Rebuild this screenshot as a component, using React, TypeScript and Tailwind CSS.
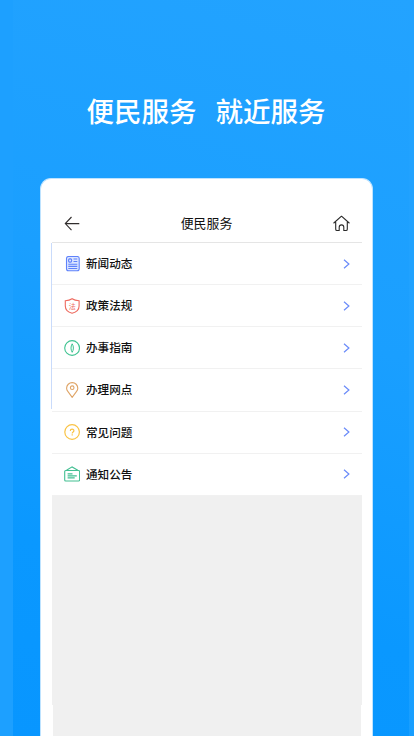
import type { ReactNode } from 'react';

function NewsIcon() {
  return (
    <svg width="16" height="16" viewBox="0 0 16 16" fill="none" stroke="#5f82fb" strokeWidth="1.100">
      <rect x="2.500" y="0.500" width="12.700" height="14.300" rx="2" fill="#dde6ff" />
      <rect x="4.600" y="2.900" width="3" height="3.200" rx="1" />
      <path d="M9.500 3h3.800M9.500 5.500h3.800M4.300 8.300h9M4.300 10.400h9M4.300 12.500h9" />
    </svg>
  );
}

function LawIcon() {
  return (
    <svg width="16" height="16" viewBox="0 0 16 16" fill="none" stroke="#ee695e" strokeWidth="1.100">
      <path d="M8.100 0.700C10 1.900 12.500 2.500 15.100 2.700V8C15.100 12 12 14.200 8.100 15.300C4.200 14.200 1.300 12 1.300 8V2.700C3.800 2.500 6.200 1.900 8.100 0.700Z" />
      <text x="8.200" y="10.500" textAnchor="middle" fontSize="7" fill="#ee695e" stroke="none" fontFamily="Noto Sans CJK SC, sans-serif">法</text>
    </svg>
  );
}

function GuideIcon() {
  return (
    <svg width="16" height="16" viewBox="0 0 16 16" fill="none" stroke="#3fc391" strokeWidth="1.100">
      <circle cx="8.100" cy="8" r="7.400" />
      <path strokeWidth="1" d="M8.200 3.800C9.800 6.400 9.800 9.700 8.200 12.300C6.600 9.700 6.600 6.400 8.200 3.800Z" />
    </svg>
  );
}

function PinIcon() {
  return (
    <svg width="16" height="16" viewBox="0 0 16 16" fill="none" stroke="#dfa466" strokeWidth="1.100">
      <path d="M8.200 15.300L4 9.700C2.800 8.200 2.600 7 2.600 6.200A5.600 5.600 0 0 1 13.800 6.200C13.800 7 13.600 8.200 12.400 9.700Z" />
      <circle cx="8.200" cy="5.700" r="1.800" />
    </svg>
  );
}

function QuestionIcon() {
  return (
    <svg width="16" height="16" viewBox="0 0 16 16" fill="none" stroke="#fac344" strokeWidth="1.200">
      <circle cx="8.100" cy="8" r="7.300" />
      <path d="M6.300 6.900C6.300 4.500 9.900 4.600 9.900 6.700C9.900 8 8.200 7.900 8.200 9.400M8.200 10.300V11.500" />
    </svg>
  );
}

function NoticeIcon() {
  return (
    <svg width="16" height="16" viewBox="0 0 16 16" fill="none" stroke="#42bf92" strokeWidth="1.100">
      <rect x="0.700" y="4.500" width="14.900" height="10.500" rx="1" />
      <path d="M2.500 4.200L8.100 0.900L13.800 4.200M3.600 7.900H8.500M3.600 9.900H12.800M3.600 11.900H10.700" />
    </svg>
  );
}

const services: { label: string; icon: ReactNode }[] = [
  { label: '新闻动态', icon: <NewsIcon /> },
  { label: '政策法规', icon: <LawIcon /> },
  { label: '办事指南', icon: <GuideIcon /> },
  { label: '办理网点', icon: <PinIcon /> },
  { label: '常见问题', icon: <QuestionIcon /> },
  { label: '通知公告', icon: <NoticeIcon /> },
];

export default function App() {
  return (
    <main className="relative flex h-[736px] w-[414px] flex-col items-center overflow-hidden bg-[linear-gradient(197deg,#23a3ff_0%,#1a9fff_42%,#0a98ff_76%,#0896ff_100%)] font-['Noto_Sans_CJK_SC',sans-serif]">
      <div className="absolute inset-y-0 left-0 w-[13px] bg-[#1da0ff]" />
      <div className="absolute inset-y-0 right-0 w-[5px] bg-[#23a3ff]/60" />
      <h1 className="flex h-[178px] w-full shrink-0 gap-[19px] pt-[90px] pl-[86.500px] text-[27.500px] leading-[40px] font-medium whitespace-nowrap text-white">
        <span>便民服务</span>
        <span>就近服务</span>
      </h1>
      <section className="mr-px flex h-[570px] w-[333px] shrink-0 flex-col rounded-t-[11px] border-x border-t border-[#bee3ff] bg-white pt-[26px] pr-[10px] pl-[11px]">
        <header className="flex h-[38px] shrink-0 items-center justify-between border-b border-[#e5e5e5] pr-[12px] pl-[12px]">
          <svg width="16" height="16" viewBox="0 0 16 16" fill="none" stroke="#302d2d" strokeWidth="1.100">
            <path d="M7.500 1L1.300 7.600L7.500 14.200M1.300 7.600H15.300" />
          </svg>
          <h2 className="-mt-px text-[12.900px] leading-5 font-normal text-[#111]">便民服务</h2>
          <svg width="17" height="17" viewBox="0 0 17 17" fill="none" stroke="#292929" strokeWidth="1.100" strokeLinejoin="round" strokeLinecap="round">
            <path d="M0.800 8L8.500 1.200L16.200 8M2.700 7.300V14.200Q2.700 15.500 4 15.500H6.200V12.300Q6.200 9.900 8.500 9.900T10.800 12.300V15.500H13Q14.300 15.500 14.300 14.200V7.300" />
          </svg>
        </header>
        <div className="relative shrink-0">
          <div className="absolute top-0 left-[-1px] h-[166px] w-px bg-[#c9dbfb]" />
          <ul>
            {services.map(({ label, icon }) => (
              <li key={label} className="flex h-[42.150px] items-center border-b border-[#f1f1f1] pr-[12px] pl-[12px]">
                {icon}
                <span className="-mt-px ml-[6px] text-[11.600px] leading-4 font-medium text-[#111]">{label}</span>
                <svg className="ml-auto" width="7" height="10" viewBox="0 0 7 10" fill="none" stroke="#6a8bf9" strokeWidth="1.200">
                  <path d="M1 0.700L5.900 5L1 9.300" />
                </svg>
              </li>
            ))}
          </ul>
        </div>
        <div className="h-[209px] shrink-0 bg-[#f0f0f0]" />
        <div className="ml-px mr-px flex-1 bg-[#f0f0f0]" />
      </section>
    </main>
  );
}
